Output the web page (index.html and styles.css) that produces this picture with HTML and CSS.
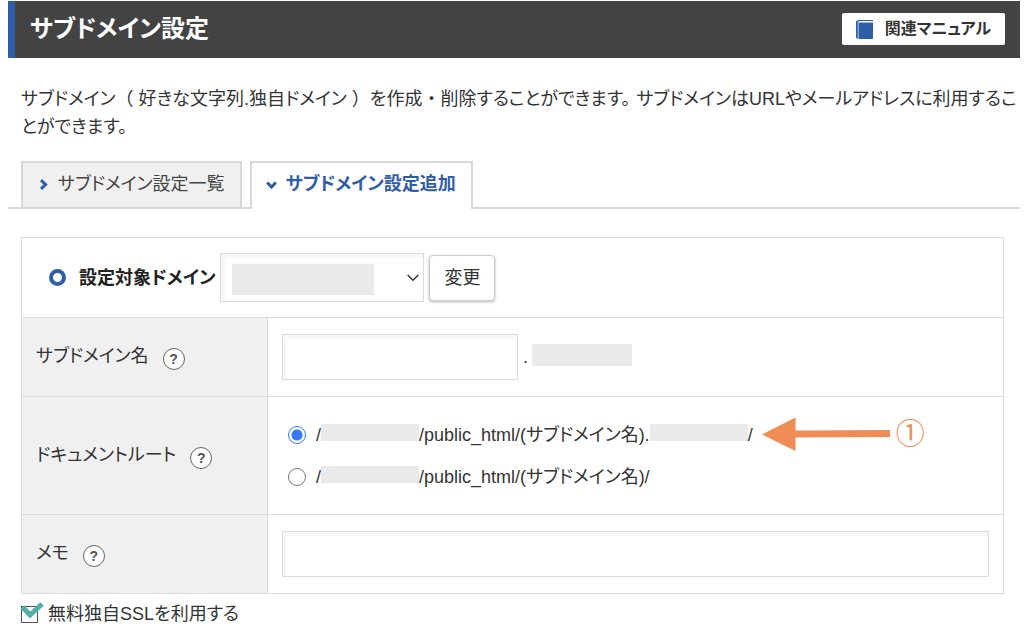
FILE: index.html
```html
<!DOCTYPE html>
<html lang="ja">
<head>
<meta charset="utf-8">
<meta name="viewport" content="width=device-width, initial-scale=1">
<title>サブドメイン設定</title>
<link rel="stylesheet" href="styles.css">
</head>
<body>
<main class="page">
  <header class="page-header">
    <h1 class="page-title">サブドメイン設定</h1>
    <a class="manual-link" href="#manual">
      <svg class="manual-icon" viewBox="0 0 17 19" aria-hidden="true">
        <path d="M2.5 0H17V1H3.2Q2 1 2 2V17.5Q2 19 .8 18.6Q0 18.3 0 17V2.5Q0 0 2.5 0Z" fill="#2f5ea8"/>
        <path d="M3 2.6H17V18Q17 19 16 19H3Z" fill="#2f5ea8"/>
        <path d="M1.5 2V18.5H3V2Z" fill="#8aa5d0"/>
      </svg>
      関連マニュアル
    </a>
  </header>

  <p class="lead">サブドメイン<span class="full">（</span> 好きな文字列.独自ドメイン <span class="full">）</span>を作成<span class="full">・</span>削除することができます<span class="stop">。</span>サブドメインはURLやメールアドレスに利用するこ<wbr>とができます。</p>

  <nav class="tabs">
    <a class="tab" href="#list">
      <svg class="tab-icon" viewBox="0 0 11 11" aria-hidden="true"><path d="M3 1.2L7.6 5.5L3 9.8"/></svg>
      サブドメイン設定一覧
    </a>
    <a class="tab tab-active" href="#add" aria-current="page">
      <svg class="tab-icon" viewBox="0 0 11 11" aria-hidden="true"><path d="M1.2 3.4L5.5 8L9.8 3.4"/></svg>
      サブドメイン設定追加
    </a>
  </nav>

  <form class="settings">
    <div class="target">
      <span class="target-mark"></span>
      <label class="target-label" for="domain">設定対象ドメイン</label>
      <span class="select-wrap">
        <select class="select" id="domain"><option></option></select>
        <span class="mask mask-select"></span>
        <svg class="select-arrow" viewBox="0 0 12 8" aria-hidden="true"><path d="M.7 1L6 6.3L11.3 1"/></svg>
      </span>
      <button class="change" type="button">変更</button>
    </div>

    <div class="row">
      <div class="row-head">
        <label for="subdomain">サブドメイン名</label>
        <button class="help" type="button" aria-label="ヘルプ">?</button>
      </div>
      <div class="row-body name-body">
        <input class="text name-input" id="subdomain" type="text">
        <span class="dot">.</span>
        <span class="mask mask-domain"></span>
      </div>
    </div>

    <div class="row">
      <div class="row-head">
        <span id="root-label">ドキュメントルート</span>
        <button class="help" type="button" aria-label="ヘルプ">?</button>
      </div>
      <div class="row-body root-body" role="radiogroup" aria-labelledby="root-label">
        <div class="choice-line">
          <label class="choice"><input class="radio" type="radio" name="root" checked><span class="path">/<span class="mask mask-path"></span>/public_html/(サブドメイン名).<span class="mask mask-path"></span>/</span></label>
          <span class="note">
            <svg class="note-arrow" viewBox="0 0 128 34" aria-hidden="true"><path d="M0 17.5L33.5 0.5V13.5L128 13V20L33.5 20.5V34Z"/></svg>
            <span class="note-number">①</span>
          </span>
        </div>
        <div class="choice-line">
          <label class="choice"><input class="radio" type="radio" name="root"><span class="path">/<span class="mask mask-path"></span>/public_html/(サブドメイン名)/</span></label>
        </div>
      </div>
    </div>

    <div class="row">
      <div class="row-head">
        <label for="memo">メモ</label>
        <button class="help" type="button" aria-label="ヘルプ">?</button>
      </div>
      <div class="row-body">
        <input class="text memo-input" id="memo" type="text">
      </div>
    </div>
  </form>

  <label class="ssl">
    <span class="check-wrap">
      <input class="check" type="checkbox" checked>
      <svg class="check-tick" viewBox="0 0 23 18" aria-hidden="true"><path d="M1.5 5L9 13L21 2"/></svg>
    </span>
    無料独自SSLを利用する
  </label>
</main>
</body>
</html>
```
FILE: styles.css
```css
* {
  box-sizing: border-box;
}

body {
  margin: 0;
  background: #fff;
  color: #333;
  font: 18px/28px "Liberation Sans", "Noto Sans CJK JP", sans-serif;
  font-feature-settings: "palt";
}

button,
input,
select {
  font: inherit;
  color: inherit;
}

.page {
  padding: 1px 4px 12px 8px;
}

.page-header {
  display: flex;
  align-items: center;
  justify-content: space-between;
  padding: 12px 15px 13px;
  border-left: 7px solid #2f5ea8;
  background: #434343;
}

.page-title {
  margin: 0;
  color: #fff;
  font-size: 24px;
  line-height: 32px;
}

.manual-link {
  display: flex;
  align-items: center;
  gap: 12px;
  padding: 2px 14px;
  border-radius: 2px;
  background: #fff;
  color: #333;
  font-size: 16px;
  font-weight: bold;
  text-decoration: none;
}

.manual-icon {
  width: 17px;
  height: 19px;
}

.lead {
  margin: 0;
  padding: 27px 2px 20px 13px;
}

.full {
  font-feature-settings: normal;
}

.stop {
  margin-right: 6px;
}

.tabs {
  display: flex;
  gap: 8px;
  padding: 0 13px;
  border-bottom: 2px solid #d8d8d8;
}

.tab {
  display: flex;
  align-items: center;
  gap: 9px;
  padding: 7px 15px 9px;
  border: 2px solid #d8d8d8;
  border-bottom: 0;
  background: #f0f0f0;
  color: #444;
  text-decoration: none;
}

.tab-active {
  margin-bottom: -2px;
  padding-right: 15px;
  padding-left: 14px;
  padding-bottom: 11px;
  background: #fff;
  color: #2f5ea8;
  font-weight: bold;
}

.tab-icon {
  width: 11px;
  height: 11px;
  fill: none;
  stroke: #2f5ea8;
  stroke-width: 3;
}

.settings {
  margin: 28px 16px 0 13px;
  border: 1px solid #dcdcdc;
}

.target {
  display: flex;
  align-items: center;
  padding: 15px 27px;
}

.target-mark {
  width: 17px;
  height: 17px;
  margin-right: 13px;
  border: 4px solid #2f5ea8;
  border-radius: 50%;
}

.target-label {
  margin-right: 5px;
  color: #222;
  font-weight: bold;
}

.select-wrap {
  position: relative;
  width: 204px;
  height: 49px;
}

.select {
  appearance: none;
  width: 100%;
  height: 100%;
  border: 1px solid #dcdcdc;
  border-radius: 0;
  background: #fff;
  box-shadow: inset 4px 4px 0 #f7f7f7;
}

.select-arrow {
  position: absolute;
  top: 21px;
  right: 5px;
  width: 12px;
  height: 8px;
  fill: none;
  stroke: #333;
  stroke-width: 1.5;
  pointer-events: none;
}

.mask {
  display: inline-block;
  background: #eaeaea;
}

.mask-select {
  position: absolute;
  top: 11px;
  left: 12px;
  width: 142px;
  height: 31px;
  pointer-events: none;
}

.change {
  height: 46px;
  margin-left: 5px;
  padding: 0 14px;
  border: 1px solid #ccc;
  border-radius: 4px;
  background: #fff;
  box-shadow: 0 1px 3px rgba(0, 0, 0, 0.3);
}

.row {
  display: grid;
  grid-template-columns: 246px 1fr;
  border-top: 1px solid #dcdcdc;
}

.row-head {
  display: flex;
  align-items: center;
  gap: 14px;
  padding: 0 14px 2px;
  border-right: 1px solid #dcdcdc;
  background: #f0f0f0;
}

.help {
  width: 22px;
  height: 22px;
  margin-top: 6px;
  padding: 0;
  border: 1px solid #666;
  border-radius: 50%;
  background: #fff;
  color: #555;
  font-size: 14px;
  font-weight: bold;
  line-height: 18px;
}

.row-body {
  padding: 16px 14px;
}

.text {
  height: 46px;
  padding: 0 10px;
  border: 1px solid #dcdcdc;
  background: #fff;
  box-shadow: inset 4px 4px 0 #f7f7f7;
}

.name-body {
  display: flex;
  align-items: center;
}

.name-input {
  width: 236px;
}

.dot {
  margin: 0 4px 0 5px;
}

.mask-domain {
  width: 100px;
  height: 22px;
  margin-bottom: 4px;
}

.root-body {
  display: flex;
  flex-direction: column;
  gap: 13px;
  padding: 23px 20px;
}

.choice-line {
  display: flex;
  align-items: center;
  height: 29px;
}

.choice {
  display: flex;
  align-items: center;
  gap: 10px;
}

.radio {
  appearance: none;
  width: 18px;
  height: 18px;
  margin: 1px 0 0;
  border: 1px solid #777;
  border-radius: 50%;
  background: #fff;
}

.radio:checked {
  border-color: #3478f6;
  background: radial-gradient(circle, #3478f6 5px, #fff 6px);
}

.path {
  display: flex;
  align-items: center;
}

.mask-path {
  width: 98px;
  height: 17px;
  margin-bottom: 4px;
}

.note {
  display: flex;
  align-items: center;
  gap: 6px;
  margin-left: 9px;
  padding-bottom: 2px;
}

.note-arrow {
  width: 128px;
  height: 34px;
  fill: #f08c55;
}

.note-number {
  padding-bottom: 6px;
  color: #f08c55;
  font-family: "Noto Sans CJK JP", sans-serif;
  font-size: 29px;
  line-height: 26px;
}

.memo-input {
  display: block;
  width: 100%;
}

.ssl {
  display: inline-flex;
  align-items: center;
  gap: 5px;
  margin: 6px 13px 0;
}

.check-wrap {
  position: relative;
  display: flex;
  align-items: center;
  width: 22px;
}

.check {
  appearance: none;
  width: 17px;
  height: 17px;
  margin: 0;
  border: 1px solid #555;
  background: #fff;
}

.check-tick {
  position: absolute;
  top: -4px;
  left: 0;
  width: 23px;
  height: 18px;
  fill: none;
  stroke: #4fb0a8;
  stroke-width: 5;
  pointer-events: none;
}
```
